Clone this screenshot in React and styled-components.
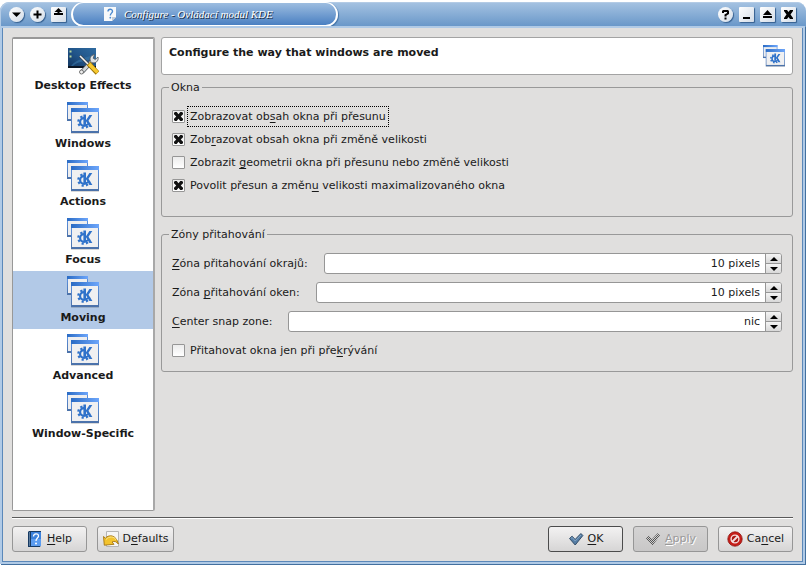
import React, { useState } from "react";
import styled, { createGlobalStyle, css } from "styled-components";

const pages = [
  "Desktop Effects",
  "Windows",
  "Actions",
  "Focus",
  "Moving",
  "Advanced",
  "Window-Specific",
];

const WindowsIcon = ({ size }) => (
  <svg width={size} height={size} viewBox="0 0 32 32" aria-hidden="true">
    <defs>
      <linearGradient id="bar" x1="0" x2="1" y1="0" y2="0">
        <stop offset="0" stopColor="#2a6bc4" />
        <stop offset="1" stopColor="#6da6fb" />
      </linearGradient>
      <linearGradient id="frame" x1="0" x2="0" y1="0" y2="1">
        <stop offset="0" stopColor="#5e97ea" />
        <stop offset="1" stopColor="#4b71a8" />
      </linearGradient>
    </defs>
    <rect x="0" y="0" width="21" height="19" fill="url(#frame)" />
    <rect x="1" y="3" width="19" height="14" fill="#eeeeef" />
    <rect x="0" y="0" width="21" height="3" fill="url(#bar)" />
    <rect x="4" y="6" width="28" height="25" fill="url(#frame)" />
    <rect x="5" y="10" width="26" height="19" fill="#f0f0f1" />
    <rect x="4" y="6" width="28" height="4" fill="url(#bar)" />
    <rect x="4" y="31" width="28" height="1" fill="#000" opacity="0.15" />
    <circle cx="17" cy="20" r="3.9" fill="none" stroke="#2f72ca" strokeWidth="2.2" />
    <circle cx="17" cy="20" r="5.7" fill="none" stroke="#2f72ca" strokeWidth="2.2" strokeDasharray="2.2 2.28" />
    <path d="M18 12.500h8v9l-1 1-3-1.500-3 1z" fill="#f0f0f1" />
    <path d="M16.400 12.500h2.600v5.800l3.400-5.300h2.900l-3.800 5.700 3.900 6.300h-3l-3.400-5.700v3.700h-2.600z" fill="#2f72ca" />
  </svg>
);

const DesktopIcon = () => (
  <svg width="32" height="32" viewBox="0 0 32 32" aria-hidden="true">
    <defs>
      <linearGradient id="desk" x1="0" x2="1" y1="1" y2="0">
        <stop offset="0" stopColor="#12355e" />
        <stop offset="0.5" stopColor="#21558a" />
        <stop offset="1" stopColor="#2f6ba0" />
      </linearGradient>
    </defs>
    <rect x="1" y="4" width="28" height="20" fill="url(#desk)" />
    <path d="M4 22C10 15 19 13 29 11v4C19 16 10 18 6 22z" fill="#3976a9" opacity="0.6" />
    <path d="M1 22h28v2H1z" fill="#0a1524" />
    <path d="M2.5 6.5h2v2h-2zM2.5 11.500h2v2h-2z" fill="#b8d79c" />
    <path d="M15 28L26 16" stroke="#555b60" strokeWidth="4.400" />
    <path d="M15 28L26 16" stroke="#d3d7da" strokeWidth="2.800" />
    <path d="M24.500 18.500c-3-3-1-7.500 3-8l-1.300 3.700 2 1.300 2.800-2.500c1 4-2.500 7-6.500 5.500z" fill="#dfe2e4" stroke="#4d5358" strokeWidth="0.8" />
    <circle cx="14.500" cy="28" r="2" fill="#eee" stroke="#555" strokeWidth="0.8" />
    <path d="M13 12l10 10" stroke="#3a4048" strokeWidth="3" />
    <path d="M13 12l10 10" stroke="#f4f4f4" strokeWidth="1.600" />
    <path d="M21.500 19.500l9 9.500" stroke="#9b7408" strokeWidth="5" />
    <path d="M22 20l8.500 8.500" stroke="#f7c92f" strokeWidth="3.400" />
  </svg>
);

const HelpIcon = () => (
  <svg width="16" height="16" viewBox="0 0 16 16" aria-hidden="true">
    <path d="M1 1l1-1h12v14l-1 2H1z" fill="#173a63" />
    <path d="M4 1h10v14H4z" fill="#3d82dc" />
    <path d="M4 8h10v7H4z" fill="#5b9cf0" />
    <path d="M2 1h1v14H2z" fill="#5d7c9d" />
    <path d="M6.500 5.500C6.500 2 11.500 2 11.500 5c0 2-2.500 2.200-2.500 5" fill="none" stroke="#fff" strokeWidth="1.300" />
    <circle cx="9" cy="12.500" r="1" fill="#fff" />
  </svg>
);

const DefaultsIcon = () => (
  <svg width="16" height="16" viewBox="0 0 16 16" aria-hidden="true">
    <path d="M3.500 0.500h12v15h-12z" fill="#f5f5f5" stroke="#b5b5b5" />
    <path
      d="M0.500 5.500l1.900 1.700C6 3 13.500 4 15.300 13c-1.800-2.400-3.800-3.200-6.300-2l2 2.300-9.700.9z"
      fill="#f3c32d"
      stroke="#a37412"
      strokeWidth="0.900"
    />
    <path d="M3 8.500C6 5 11 5.200 13.300 9" stroke="#fbe58b" fill="none" />
  </svg>
);

const CheckIcon = ({ faded }) => (
  <svg width="16" height="16" viewBox="0 0 16 16" aria-hidden="true">
    <defs>
      <pattern id="dither" width="2" height="2" patternUnits="userSpaceOnUse">
        <path d="M0 0h1v1H0zM1 1h1v1H1z" fill="#555" />
      </pattern>
    </defs>
    <path
      d="M1.500 7.500l2.600-2.300 3 3.300 5.800-6 2 2-7.700 9.500z"
      fill={faded ? "url(#dither)" : "#557da5"}
      stroke={faded ? "url(#dither)" : "#354f69"}
    />
    {!faded && <path d="M3 7.300l1.200-.8 3 3.500L13 4" stroke="#83a5c5" fill="none" />}
  </svg>
);

const CancelIcon = () => (
  <svg width="16" height="16" viewBox="0 0 16 16" aria-hidden="true">
    <circle cx="8" cy="8" r="7.200" fill="#c71d18" stroke="#8e1512" strokeWidth="0.800" />
    <circle cx="8" cy="8" r="3.900" fill="#a91512" stroke="#f3dddd" strokeWidth="1.400" />
    <path d="M5 11l6-6" stroke="#f3dddd" strokeWidth="2" />
  </svg>
);

const PageIcon = () => (
  <svg width="16" height="16" viewBox="0 0 16 16" aria-hidden="true">
    <path d="M2 1h12v10l-4 4H2z" fill="#f6f8fa" />
    <path d="M14 11l-4 4v-4z" fill="#c3ccd6" />
    <path d="M6 5.500C6 2.500 10.500 2.500 10.500 5.200 10.500 7 8.300 7.300 8.300 9.500" fill="none" stroke="#4b89cf" strokeWidth="1.400" />
    <circle cx="8.300" cy="11.700" r="0.900" fill="#4b89cf" />
  </svg>
);

const glyphs = {
  menu: "M3 5.500h9L7.500 10z",
  plus: "M6.500 3.500h2v3h3v2h-3v3h-2v-3h-3v-2h3z",
  shade: "M7.500 1l4 4h-3v1h-2V5h-3zM3 6h9v2H3z",
  help: "M4 6V4l1-1h5l1 1v3L8.500 8.500v1h-2v-2L9 6V5H6v1zM6.500 10.500h2v2h-2z",
  minimize: "M4 10h7v2H4z",
  maximize: "M7.500 3L12 8H3zM3 9h9v2H3z",
  close: "M3 3h3l1.500 2L9 3h3v1L9.500 7.500 12 11v1H9l-1.500-2L6 12H3v-1l2.500-3.500L3 4z",
};

const TitleButton = ({ label, glyph, round }) => (
  <TitleControl type="button" aria-label={label} $round={round}>
    <svg width="15" height="15" viewBox="0 0 15 15" aria-hidden="true">
      <path d={glyphs[glyph]} fill="#000" />
    </svg>
  </TitleControl>
);

const CheckRow = ({ children, checked = false, focused }) => (
  <CheckLabel>
    <CheckBox type="checkbox" defaultChecked={checked} />
    <CheckText $focused={focused}>{children}</CheckText>
  </CheckLabel>
);

const SpinRow = ({ id, label, value }) => {
  const [amount, setAmount] = useState(value);
  const text = amount === 0 ? "nic" : `${amount} pixels`;

  return (
    <SpinLine>
      <label htmlFor={id}>{label}</label>
      <SpinBox>
        <SpinInput id={id} type="text" value={text} readOnly />
        <SpinButtons>
          <SpinButton type="button" aria-label="Up" onClick={() => setAmount(amount + 1)}>
            <svg width="8" height="4" viewBox="0 0 8 4"><path d="M4 0l4 4H0z" /></svg>
          </SpinButton>
          <SpinButton type="button" aria-label="Down" onClick={() => setAmount(Math.max(0, amount - 1))}>
            <svg width="8" height="4" viewBox="0 0 8 4"><path d="M4 4L0 0h8z" /></svg>
          </SpinButton>
        </SpinButtons>
      </SpinBox>
    </SpinLine>
  );
};

export default function App() {
  const [page, setPage] = useState("Moving");

  return (
    <Window>
      <GlobalStyle />
      <TitleBar>
        <TitleControls>
          <TitleButton label="Menu" glyph="menu" round />
          <TitleButton label="All desktops" glyph="plus" round />
          <TitleButton label="Shade" glyph="shade" />
        </TitleControls>
        <TitleTab>
          <PageIcon />
          <span>Configure - Ovládací modul KDE</span>
        </TitleTab>
        <TitleControls $end>
          <TitleButton label="Help" glyph="help" round />
          <TitleButton label="Minimize" glyph="minimize" />
          <TitleButton label="Maximize" glyph="maximize" />
          <TitleButton label="Close" glyph="close" />
        </TitleControls>
      </TitleBar>

      <Content>
        <Main>
          <Sidebar>
            {pages.map((name) => (
              <PageItem key={name} type="button" $active={name === page} onClick={() => setPage(name)}>
                {name === "Desktop Effects" ? <DesktopIcon /> : <WindowsIcon size={32} />}
                <span>{name}</span>
              </PageItem>
            ))}
          </Sidebar>

          <Settings>
            <Header>
              <Heading>Configure the way that windows are moved</Heading>
              <WindowsIcon size={22} />
            </Header>

            <Group $tall>
              <legend>Okna</legend>
              <CheckRow checked focused>Zobrazovat ob<u>s</u>ah okna při přesunu</CheckRow>
              <CheckRow checked>Zob<u>r</u>azovat obsah okna při změně velikosti</CheckRow>
              <CheckRow>Zobrazit <u>g</u>eometrii okna při přesunu nebo změně velikosti</CheckRow>
              <CheckRow checked>Povolit přesun a změn<u>u</u> velikosti maximalizovaného okna</CheckRow>
            </Group>

            <Group>
              <legend>Zóny přitahování</legend>
              <SpinRow id="border-zone" label={<><u>Z</u>óna přitahování okrajů:</>} value={10} />
              <SpinRow id="window-zone" label={<>Zóna <u>p</u>řitahování oken:</>} value={10} />
              <SpinRow id="center-zone" label={<><u>C</u>enter snap zone:</>} value={0} />
              <CheckRow>Přitahovat okna jen při pře<u>k</u>rývání</CheckRow>
            </Group>
          </Settings>
        </Main>

        <Footer>
          <Button type="button"><HelpIcon /><span><u>H</u>elp</span></Button>
          <Button type="button" $wide><DefaultsIcon /><span>D<u>e</u>faults</span></Button>
          <Spacer />
          <Button type="button" $primary><CheckIcon /><span><u>O</u>K</span></Button>
          <Button type="button" disabled><CheckIcon faded /><span><u>A</u>pply</span></Button>
          <Button type="button"><CancelIcon /><span>Ca<u>n</u>cel</span></Button>
        </Footer>
      </Content>
    </Window>
  );
}

const GlobalStyle = createGlobalStyle`
  * {
    box-sizing: border-box;
  }

  body {
    margin: 0;
    background: #fff;
    color: #1a1a1a;
    font: 11px/13px "DejaVu Sans", sans-serif;
  }

  button, input {
    font: inherit;
    color: inherit;
  }

  u {
    text-decoration: underline;
    text-underline-offset: 2px;
    text-decoration-thickness: 1px;
    text-decoration-skip-ink: none;
  }

  svg {
    display: block;
    flex: none;
  }
`

const Window = styled.div`
  display: flex;
  flex-direction: column;
  min-height: 100vh;
  padding-top: 2px;
`

const TitleBar = styled.header`
  display: flex;
  align-items: center;
  height: 26px;
  padding: 0 10px 0 9px;
  background: linear-gradient(#a6c3e2, #6796c8);
  border-bottom: 1px solid #5b8abd;
  border-radius: 9px 9px 0 0;
  box-shadow: inset 1px 1px 0 #b3cbe5;
`

const TitleControls = styled.div`
  display: flex;
  gap: 6px;
  margin-left: ${(props) => (props.$end ? "auto" : "0")};
`

const TitleControl = styled.button`
  width: 15px;
  height: 15px;
  padding: 0;
  border: 0;
  border-radius: ${(props) => (props.$round ? "50%" : "1px")};
  background: linear-gradient(135deg, #fff, #d3dce7);
  box-shadow: 1px 1px 1px #355f8f;
`

const TitleTab = styled.div`
  display: flex;
  align-items: center;
  gap: 6px;
  width: 267px;
  height: 25px;
  margin-left: 5px;
  padding-left: 29px;
  border: 2px solid #fff;
  border-top-width: 1px;
  border-radius: 13px;
  background: linear-gradient(#9dbde0, #4a80c2);
  box-shadow: 1px 1px 1px #4474a8;
  color: #fff;
  font: italic 11px/14px "Liberation Serif", serif;
  text-shadow: 1px 1px 0 #1c2c40;
  white-space: nowrap;
`

const Content = styled.div`
  flex: 1;
  display: flex;
  flex-direction: column;
  padding: 9px;
  background: #e0dfde;
  border: 1px solid #5b88b9;
  border-top: 0;
  margin: 0 3px 3px 2px;
  box-shadow: 0 0 0 2px #b0cae6, 1px 1px 0 2px #43709f;
`

const Main = styled.main`
  flex: 1;
  display: flex;
  gap: 6px;
`

const Sidebar = styled.nav`
  flex: none;
  width: 143px;
  border: 1px solid #989898;
  border-width: 2px 2px 1px 1px;
  border-right-color: #a8a8a8;
  border-radius: 2px;
  background: #fff;
`

const PageItem = styled.button`
  display: flex;
  flex-direction: column;
  align-items: center;
  gap: 2px;
  width: 100%;
  height: 58px;
  padding: 5px 0 3px;
  border: 0;
  background: ${(props) => (props.$active ? "#b2c9e7" : "transparent")};
  font-weight: bold;
  line-height: 16px;
`

const Settings = styled.div`
  flex: 1;
  min-width: 0;
`

const Header = styled.div`
  display: flex;
  justify-content: space-between;
  height: 38px;
  padding: 7px 7px 0;
  border: 1px solid #a3a3a3;
  border-radius: 3px;
  background: #fff;
`

const Heading = styled.h1`
  margin: 0;
  font-size: 11px;
  line-height: 16px;
`

const Group = styled.fieldset`
  margin: ${(props) => (props.$tall ? "6px 0 0" : "11px 0 0")};
  padding: ${(props) => (props.$tall ? "12px 10px 20px" : "12px 10px 10px")};
  border: 1px solid #999;
  border-radius: 3px;

  legend {
    margin-left: -3px;
    padding: 0 2px;
  }
`

const CheckLabel = styled.label`
  display: flex;
  align-items: center;
  gap: 2px;
  margin-bottom: 2px;

  &:last-child {
    margin-bottom: 0;
  }
`

const CheckBox = styled.input`
  appearance: none;
  display: grid;
  place-content: center;
  width: 13px;
  height: 13px;
  margin: 0;
  border: 1px solid #969696;
  border-radius: 1px;
  background: linear-gradient(#ececec, #fff);

  &:checked::before {
    content: "";
    width: 9px;
    height: 9px;
    background: #111;
    clip-path: polygon(0 10%, 10% 0, 30% 0, 50% 25%, 70% 0, 90% 0, 100% 10%, 100% 25%, 75% 50%, 100% 75%, 100% 90%, 90% 100%, 70% 100%, 50% 75%, 30% 100%, 10% 100%, 0 90%, 0 75%, 25% 50%, 0 25%);
  }
`

const CheckText = styled.span`
  padding: 3px 2px;
  border: 1px dotted transparent;

  ${(props) =>
    props.$focused &&
    css`
      border-color: #000;
    `}
`

const SpinLine = styled.div`
  display: flex;
  align-items: center;
  gap: 16px;
  margin-bottom: 8px;
`

const SpinBox = styled.div`
  flex: 1;
  display: flex;
  height: 21px;
  border: 1px solid #969696;
  border-radius: 3px;
  background: #fff;
  overflow: hidden;
`

const SpinInput = styled.input`
  flex: 1;
  min-width: 0;
  padding: 0 5px;
  border: 0;
  outline: 0;
  background: transparent;
  text-align: right;
`

const SpinButtons = styled.div`
  display: flex;
  flex-direction: column;
  width: 16px;
  border-left: 1px solid #969696;
`

const SpinButton = styled.button`
  flex: 1;
  display: flex;
  align-items: center;
  justify-content: center;
  padding: 0;
  border: 0;
  background: linear-gradient(#f4f4f4, #d8d8d8);

  & + & {
    border-top: 1px solid #969696;
  }
`

const Footer = styled.footer`
  display: flex;
  gap: 10px;
  margin-top: 6px;
  padding-top: 8px;
  border-top: 1px solid #5a5a5a;
  box-shadow: inset 0 1px 0 #fff;
`

const Spacer = styled.div`
  flex: 1;
`

const Button = styled.button`
  display: flex;
  align-items: center;
  justify-content: center;
  gap: 4px;
  width: ${(props) => (props.$wide ? "77px" : "75px")};
  height: 26px;
  padding: 0 0 1px;
  border: 1px solid ${(props) => (props.$primary ? "#4c4c4c" : "#969696")};
  border-radius: 3px;
  background: linear-gradient(#f3f2f2, #d6d5d5);

  &:disabled {
    background: linear-gradient(#d4d3d3, #c8c7c7);
    color: #999;
    text-shadow: 1px 1px 0 #fff;
  }
`
